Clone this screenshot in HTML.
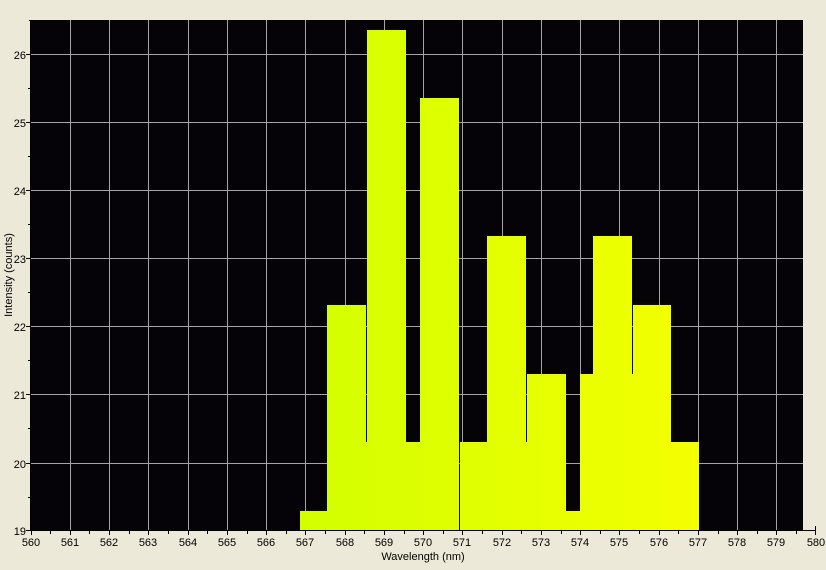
<!DOCTYPE html>
<html><head><meta charset="utf-8"><style>
html,body{margin:0;padding:0;background:#ece9d8;}
svg{display:block}
text{font-family:"Liberation Sans",sans-serif;font-size:11px;fill:#000}
</style></head><body>
<svg width="826" height="570" xmlns="http://www.w3.org/2000/svg">
<defs>
<linearGradient id="g" gradientUnits="userSpaceOnUse" x1="300" y1="0" x2="700" y2="0">
<stop offset="0" stop-color="#d2ff00"/><stop offset="1" stop-color="#f4ff00"/>
</linearGradient>
</defs>
<rect x="0" y="0" width="826" height="570" fill="#ece9d8"/>
<rect x="31" y="20" width="772" height="511" fill="#050308"/>
<g stroke="#a4a4a4" stroke-width="1">
<line x1="70.5" y1="20" x2="70.5" y2="531"/><line x1="109.5" y1="20" x2="109.5" y2="531"/><line x1="148.5" y1="20" x2="148.5" y2="531"/><line x1="188.5" y1="20" x2="188.5" y2="531"/><line x1="227.5" y1="20" x2="227.5" y2="531"/><line x1="266.5" y1="20" x2="266.5" y2="531"/><line x1="305.5" y1="20" x2="305.5" y2="531"/><line x1="345.5" y1="20" x2="345.5" y2="531"/><line x1="384.5" y1="20" x2="384.5" y2="531"/><line x1="423.5" y1="20" x2="423.5" y2="531"/><line x1="462.5" y1="20" x2="462.5" y2="531"/><line x1="502.5" y1="20" x2="502.5" y2="531"/><line x1="541.5" y1="20" x2="541.5" y2="531"/><line x1="580.5" y1="20" x2="580.5" y2="531"/><line x1="619.5" y1="20" x2="619.5" y2="531"/><line x1="659.5" y1="20" x2="659.5" y2="531"/><line x1="698.5" y1="20" x2="698.5" y2="531"/><line x1="737.5" y1="20" x2="737.5" y2="531"/><line x1="776.5" y1="20" x2="776.5" y2="531"/>
<line x1="31" y1="54.5" x2="803" y2="54.5"/><line x1="31" y1="122.5" x2="803" y2="122.5"/><line x1="31" y1="190.5" x2="803" y2="190.5"/><line x1="31" y1="258.5" x2="803" y2="258.5"/><line x1="31" y1="326.5" x2="803" y2="326.5"/><line x1="31" y1="394.5" x2="803" y2="394.5"/><line x1="31" y1="463.5" x2="803" y2="463.5"/>
</g>
<g fill="url(#g)">
<rect x="300" y="511" width="27" height="20"/>
<rect x="327" y="305" width="39" height="226"/>
<rect x="366" y="442" width="1" height="89"/>
<rect x="367" y="30" width="39" height="501"/>
<rect x="406" y="442" width="14" height="89"/>
<rect x="420" y="98" width="39" height="433"/>
<rect x="460" y="442" width="27" height="89"/>
<rect x="487" y="236" width="39" height="295"/>
<rect x="526" y="442" width="1" height="89"/>
<rect x="527" y="374" width="39" height="157"/>
<rect x="566" y="511" width="14" height="20"/>
<rect x="580" y="374" width="13" height="157"/>
<rect x="593" y="236" width="39" height="295"/>
<rect x="632" y="374" width="1" height="157"/>
<rect x="633" y="305" width="38" height="226"/>
<rect x="671" y="442" width="28" height="89"/>
</g>
<g stroke="#000" stroke-width="1">
<line x1="30.5" y1="20" x2="30.5" y2="531"/>
<line x1="30" y1="530.5" x2="816" y2="530.5"/>
<line x1="29" y1="20.5" x2="31" y2="20.5"/>
<line x1="26" y1="54.5" x2="31" y2="54.5"/><line x1="26" y1="122.5" x2="31" y2="122.5"/><line x1="26" y1="190.5" x2="31" y2="190.5"/><line x1="26" y1="258.5" x2="31" y2="258.5"/><line x1="26" y1="326.5" x2="31" y2="326.5"/><line x1="26" y1="394.5" x2="31" y2="394.5"/><line x1="26" y1="463.5" x2="31" y2="463.5"/><line x1="26" y1="530.5" x2="31" y2="530.5"/>
<line x1="28" y1="88.5" x2="31" y2="88.5"/><line x1="28" y1="156.5" x2="31" y2="156.5"/><line x1="28" y1="224.5" x2="31" y2="224.5"/><line x1="28" y1="292.5" x2="31" y2="292.5"/><line x1="28" y1="360.5" x2="31" y2="360.5"/><line x1="28" y1="428.5" x2="31" y2="428.5"/><line x1="28" y1="497.5" x2="31" y2="497.5"/>
<line x1="815.5" y1="526" x2="815.5" y2="535"/>
<path d="M31.5 531v4M70.5 531v4M109.5 531v4M148.5 531v4M188.5 531v4M227.5 531v4M266.5 531v4M305.5 531v4M345.5 531v4M384.5 531v4M423.5 531v4M462.5 531v4M502.5 531v4M541.5 531v4M580.5 531v4M619.5 531v4M659.5 531v4M698.5 531v4M737.5 531v4M776.5 531v4"/>
<path d="M50.5 531v3M89.5 531v3M129.5 531v3M168.5 531v3M207.5 531v3M247.5 531v3M286.5 531v3M325.5 531v3M364.5 531v3M404.5 531v3M443.5 531v3M482.5 531v3M521.5 531v3M561.5 531v3M600.5 531v3M639.5 531v3M678.5 531v3M718.5 531v3M757.5 531v3M796.5 531v3"/>
</g>
<g text-anchor="end">
<text x="26" y="59">26</text><text x="26" y="127">25</text><text x="26" y="195">24</text><text x="26" y="263">23</text><text x="26" y="331">22</text><text x="26" y="399">21</text><text x="26" y="468">20</text><text x="26" y="535">19</text>
</g>
<g text-anchor="middle">
<text x="31" y="546">560</text><text x="70" y="546">561</text><text x="109" y="546">562</text><text x="148" y="546">563</text><text x="188" y="546">564</text><text x="227" y="546">565</text><text x="266" y="546">566</text><text x="305" y="546">567</text><text x="345" y="546">568</text><text x="384" y="546">569</text><text x="423" y="546">570</text><text x="462" y="546">571</text><text x="502" y="546">572</text><text x="541" y="546">573</text><text x="580" y="546">574</text><text x="619" y="546">575</text><text x="659" y="546">576</text><text x="698" y="546">577</text><text x="737" y="546">578</text><text x="776" y="546">579</text><text x="816" y="546">580</text>
<text x="423" y="560">Wavelength (nm)</text>
<text x="0" y="0" transform="translate(12,275) rotate(-90)">Intensity (counts)</text>
</g>
</svg>
</body></html>
